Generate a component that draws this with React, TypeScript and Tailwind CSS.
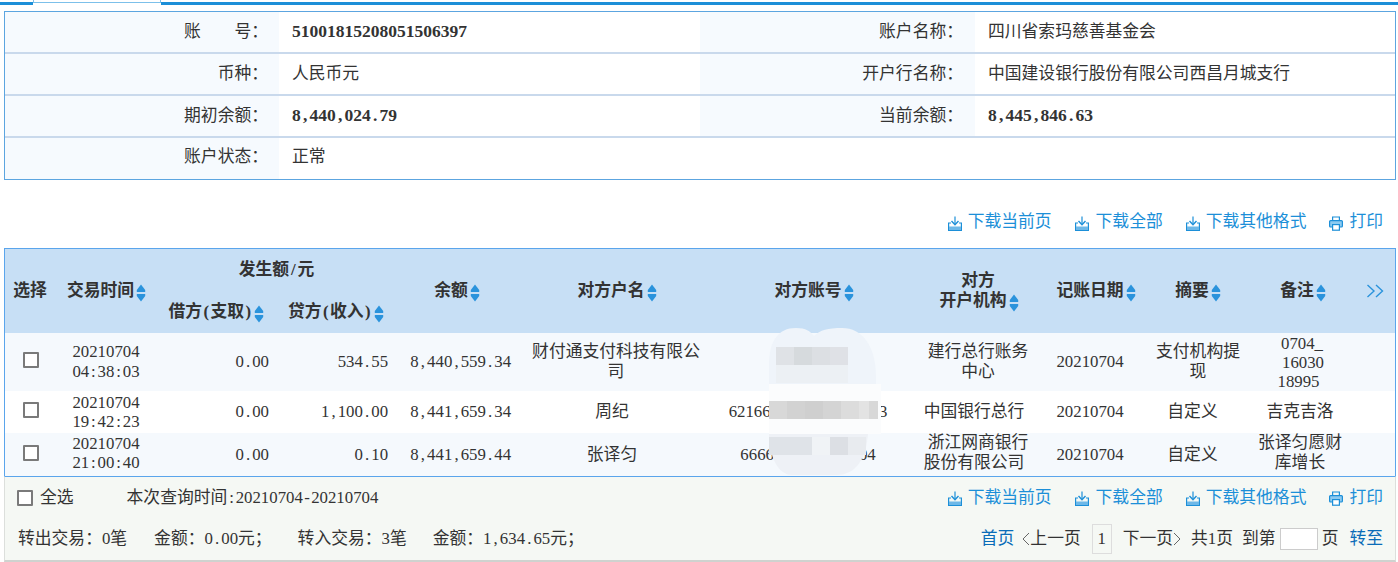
import React from "react";

const N = ({ t, bold }: { t: string; bold?: boolean }) => (
  <span className="whitespace-nowrap">
    {t.split("").map((c, i) => (
      <span key={i} className={bold ? "inline-block w-[8.75px] text-center text-[17.5px] font-bold" : "inline-block w-[8.4px] text-center"}>
        {c}
      </span>
    ))}
  </span>
);

const Sort = () => (
  <svg width="10" height="18" viewBox="0 0 10 18" className="ml-[2px] shrink-0 translate-y-[2px]">
    <path d="M5 0.5 L9.2 6 V8 H0.8 V6 Z" fill="#2a93dc" />
    <path d="M5 17.5 L9.2 12 V10 H0.8 V12 Z" fill="#2a93dc" />
  </svg>
);

const Dl = () => (
  <svg width="14" height="15" viewBox="0 0 14 15" fill="none" className="shrink-0 translate-y-[1px]">
    <path d="M7 0.5 V8" stroke="#1c8fd8" strokeWidth="1.2" />
    <path d="M3.5 5 L7 8.8 L10.5 5" stroke="#1c8fd8" strokeWidth="1.4" />
    <path d="M3 7 H0.6 V14.4 H13.4 V7 H11" stroke="#1c8fd8" strokeWidth="1.2" />
    <rect x="1" y="10.5" width="12" height="3.5" fill="#6db8e8" />
  </svg>
);

const Pr = () => (
  <svg width="14" height="15" viewBox="0 0 14 15" fill="none" className="shrink-0 translate-y-[1px]">
    <path d="M3.6 4.5 V1 H10.4 V4.5" stroke="#1c8fd8" strokeWidth="1.2" />
    <rect x="0.6" y="4.6" width="12.8" height="6.4" rx="1" fill="#8ccaf0" stroke="#1c8fd8" strokeWidth="1.2" />
    <rect x="3.6" y="8.6" width="6.8" height="5.6" fill="#fff" stroke="#1c8fd8" strokeWidth="1.2" />
  </svg>
);

const Links = () => (
  <div className="flex items-center text-[#1c8fd8]">
    <span className="flex items-center gap-[6px]"><Dl />下载当前页</span>
    <span className="ml-[23px] flex items-center gap-[7px]"><Dl />下载全部</span>
    <span className="ml-[23px] flex items-center gap-[6px]"><Dl />下载其他格式</span>
    <span className="ml-[23px] flex items-center gap-[6px]"><Pr />打印</span>
  </div>
);

const Box = () => (
  <input type="checkbox" className="block h-[16px] w-[16px] appearance-none rounded-[1px] border-2 border-[#7a7a7a] bg-white" />
);

const Chev = ({ right }: { right?: boolean }) => (
  <svg width="8" height="14" viewBox="0 0 8 14" fill="none" className="shrink-0">
    <path d={right ? "M1 1 L7 7 L1 13" : "M7 1 L1 7 L7 13"} stroke="#666" strokeWidth="1" />
  </svg>
);

const InfoRow = ({ a, b, c, d, last }: { a: React.ReactNode; b: React.ReactNode; c?: React.ReactNode; d?: React.ReactNode; last?: boolean }) => (
  <div className={last ? "grid h-[41px] grid-cols-[274px_421px_275px_1fr]" : "grid h-[42px] grid-cols-[274px_421px_275px_1fr] border-b-2 border-[#c9d9ec]"}>
    <div className={last ? "flex items-center justify-end whitespace-pre bg-[#f6fafe] pb-[3px] pr-[11px]" : "flex items-center justify-end whitespace-pre bg-[#f6fafe] pb-[1px] pr-[11px]"}>{a}</div>
    <div className={last ? "flex items-center pb-[3px] pl-[13px]" : "flex items-center pb-[1px] pl-[13px]"}>{b}</div>
    <div className={c ? "flex items-center justify-end bg-[#f6fafe] pb-[1px] pr-[12px]" : ""}>{c}</div>
    <div className="flex items-center pb-[1px] pl-[13px]">{d}</div>
  </div>
);

const Th = ({ children, className = "" }: { children: React.ReactNode; className?: string }) => (
  <span className={`inline-flex items-center justify-center font-bold ${className}`}>
    {children}
    <Sort />
  </span>
);

const rows = [
  {
    h: "h-[58px] bg-[#f5f9fd]",
    time: ["20210704", "04:38:03"],
    timeCls: "pr-[3px]",
    cellCls: "",
    c: "534.55",
    bal: "8,440,559.34",
    name: "财付通支付科技有限公司",
    nameCls: "pl-[12px] pr-[8px]",
    sumCls: "pl-[15px] pr-[9px]",
    acct: <span />,
    orgCls: "pl-[18px] pr-[10px]",
    org: "建行总行账务中心",
    sum: "支付机构提现",
    note: (
      <div className="leading-[19px]">
        <div className="pl-[4px]"><N t="0704_" /></div>
        <div className="pl-[6px]"><N t="16030" /></div>
        <div className="pr-[3px]"><N t="18995" /></div>
      </div>
    ),
  },
  {
    h: "h-[42px] bg-white",
    time: ["20210704", "19:42:23"],
    timeCls: "pr-[3px] leading-[19px]",
    cellCls: "",
    c: "1,100.00",
    bal: "8,441,659.34",
    name: "周纪",
    nameCls: "pl-[10px] pr-[14px]",
    sumCls: "pl-[12px] pr-[17px]",
    acct: <span className="flex justify-center"><N t="62166" /><span className="inline-block w-[100px]" /><N t="43" /></span>,
    orgCls: "px-[14px]",
    org: "中国银行总行",
    sum: "自定义",
    note: "吉克吉洛",
  },
  {
    h: "h-[42px] bg-[#f5f9fd]",
    time: ["20210704", "21:00:40"],
    timeCls: "pr-[3px] pb-[3px] leading-[19px]",
    cellCls: "pb-[3px]",
    c: "0.10",
    bal: "8,441,659.44",
    name: "张译匀",
    nameCls: "pl-[10px] pr-[14px]",
    sumCls: "pl-[12px] pr-[17px]",
    acct: <span className="flex justify-center"><N t="6666" /><span className="inline-block w-[85px]" /><N t="04" /></span>,
    orgCls: "px-[10px]",
    org: (
      <div className="whitespace-nowrap">
        <div className="pl-[8px]">浙江网商银行</div>
        <div>股份有限公司</div>
      </div>
    ),
    sum: "自定义",
    note: "张译匀愿财库增长",
  },
];

export default function App() {
  return (
    <div className="relative h-[562px] w-[1398px] overflow-hidden bg-white font-['Liberation_Serif','Noto_Sans_CJK_SC',serif] text-[16.8px] leading-[20px] text-[#333]">
      <div className="flex h-[5px] items-end">
        <div className="h-[3px] w-[33px] bg-[#1c8fd8]" />
        <div className="h-[3px] w-[128px] self-start border-x border-b border-[#7cc0ea] bg-white" />
        <div className="h-[3px] flex-1 bg-[#1c8fd8]" />
      </div>

      <div className="ml-1 mr-[2px] mt-[6px] border border-[#5ca5e0]">
        <InfoRow
          a={"账\u3000\u3000号："}
          b={<N t="51001815208051506397" bold />}
          c="账户名称："
          d="四川省索玛慈善基金会"
        />
        <InfoRow a="币种：" b="人民币元" c="开户行名称：" d="中国建设银行股份有限公司西昌月城支行" />
        <InfoRow a="期初余额：" b={<N t="8,440,024.79" bold />} c="当前余额：" d={<N t="8,445,846.63" bold />} />
        <InfoRow a="账户状态：" b="正常" last />
      </div>

      <div className="flex h-[68px] items-center justify-end pr-[15px] pt-[16px]">
        <Links />
      </div>

      <div className="ml-1 mr-[2px] border-x border-t border-[#5aa5ec]">
        <table className="w-full table-fixed">
          <colgroup>
            <col className="w-[50px]" />
            <col className="w-[105px]" />
            <col className="w-[118px]" />
            <col className="w-[119px]" />
            <col className="w-[123px]" />
            <col className="w-[188px]" />
            <col className="w-[200px]" />
            <col className="w-[132px]" />
            <col className="w-[100px]" />
            <col className="w-[110px]" />
            <col className="w-[100px]" />
            <col className="w-[45px]" />
          </colgroup>
          <thead className="bg-[#c7dff5]">
            <tr className="h-[42px]">
              <th rowSpan={2} className="font-bold">选择</th>
              <th rowSpan={2}><Th className="pr-[2px]">交易时间</Th></th>
              <th colSpan={2} className="pr-[4px] font-bold">发生额<N t="/" />元</th>
              <th rowSpan={2}><Th className="pr-[3px]">余额</Th></th>
              <th rowSpan={2}><Th className="pl-[6px]">对方户名</Th></th>
              <th rowSpan={2}><Th className="pl-[12px]">对方账号</Th></th>
              <th rowSpan={2}>
                <div className="pl-[8px] font-bold">对方</div>
                <Th className="pl-[10px]">开户机构</Th>
              </th>
              <th rowSpan={2}><Th className="pl-[12px]">记账日期</Th></th>
              <th rowSpan={2}><Th className="pl-[6px]">摘要</Th></th>
              <th rowSpan={2}><Th className="pl-[6px]">备注</Th></th>
              <th rowSpan={2}>
                <svg width="18" height="14" viewBox="0 0 18 14" fill="none" className="mx-auto translate-x-[2px]">
                  <path d="M1.5 1 L8 7 L1.5 13 M10 1 L16.5 7 L10 13" stroke="#2a93dc" strokeWidth="1.4" />
                </svg>
              </th>
            </tr>
            <tr className="h-[42px]">
              <th className="pr-[5px]"><Th>借方<N t="(" />支取<N t=")" /></Th></th>
              <th className="pr-[3px]"><Th>贷方<N t="(" />收入<N t=")" /></Th></th>
            </tr>
          </thead>
          <tbody className="text-center">
            {rows.map((r, i) => (
              <tr key={i} className={r.h}>
                <td><div className="mb-[4px] flex justify-center pl-[2px]"><Box /></div></td>
                <td className={r.timeCls}><div><N t={r.time[0]} /></div><div><N t={r.time[1]} /></div></td>
                <td className="pr-[9px] text-right"><N t="0.00" /></td>
                <td className="pr-[9px] text-right"><N t={r.c} /></td>
                <td className="pr-[9px] text-right"><N t={r.bal} /></td>
                <td className={r.nameCls}>{r.name}</td>
                <td>{r.acct}</td>
                <td className={`${r.orgCls} ${r.cellCls}`}>{r.org}</td>
                <td><N t="20210704" /></td>
                <td className={r.sumCls}>{r.sum}</td>
                <td className={`px-[8px] ${r.cellCls}`}>{r.note}</td>
                <td />
              </tr>
            ))}
          </tbody>
        </table>
      </div>

      <div className="ml-1 mr-[2px] h-[86px] border-x border-t border-b-2 border-x-[#dcdfdc] border-t-[#5aa5ec] border-b-[#cfd2cf] bg-[#f5f8f4]">
        <div className="flex h-[41px] items-center justify-between pr-[12px]">
          <div className="flex items-center pl-[12px]">
            <Box />
            <span className="ml-[7px]">全选</span>
            <span className="ml-[53px]">本次查询时间<N t=":20210704-20210704" /></span>
          </div>
          <Links />
        </div>
        <div className="flex h-[42px] items-center justify-between pr-[12px]">
          <div className="flex items-center pl-[13px]">
            <span>转出交易：<N t="0" />笔</span>
            <span className="ml-[27px]">金额：<N t="0.00" />元；</span>
            <span className="ml-[26px]">转入交易：<N t="3" />笔</span>
            <span className="ml-[26px]">金额：<N t="1,634.65" />元；</span>
          </div>
          <div className="flex items-center">
            <span className="text-[#0a6cb8]">首页</span>
            <span className="ml-[8px] flex items-center"><Chev />上一页</span>
            <span className="ml-[11px] flex h-[30px] w-[20px] items-center justify-center border border-[#ddd]">1</span>
            <span className="ml-[11px] flex items-center">下一页<Chev right /></span>
            <span className="ml-[10px]">共<N t="1" />页</span>
            <span className="ml-[9px]">到第</span>
            <span className="ml-[4px] h-[22px] w-[38px] border border-[#ccc] bg-white" />
            <span className="ml-[4px]">页</span>
            <span className="ml-[11px] text-[#0a6cb8]">转至</span>
          </div>
        </div>
      </div>

      <svg width="130" height="152" viewBox="0 0 130 152" className="absolute left-[760px] top-[326px]">
        <path d="M9 40 C9 15 18 2 36 2 C46 2 50 5 54 10 C60 4 68 2 82 2 C102 2 116 20 116 50 V58 H9 Z" fill="#eff4fa" />
        <rect x="9" y="58" width="112" height="50" fill="#fbfcfd" />
        <path d="M9 108 H108 C106 130 98 149 76 149 H32 C18 149 9 130 9 108 Z" fill="#eef1f6" />
        <g>
          <rect x="16" y="21" width="18" height="18" fill="#dfe2e6" />
          <rect x="34" y="21" width="18" height="18" fill="#d6dadd" />
          <rect x="52" y="21" width="18" height="18" fill="#dcdfe3" />
          <rect x="70" y="21" width="18" height="18" fill="#dfe1e6" />
          <rect x="16" y="39" width="72" height="18" fill="#ecf0f4" />
          <rect x="9" y="75" width="18" height="18" fill="#d8d8d8" />
          <rect x="27" y="75" width="18" height="18" fill="#d2d2d2" />
          <rect x="45" y="75" width="18" height="18" fill="#cfcfcf" />
          <rect x="63" y="75" width="18" height="18" fill="#d4d4d4" />
          <rect x="81" y="75" width="18" height="18" fill="#dcdcdc" />
          <rect x="99" y="75" width="10" height="18" fill="#e3e3e3" />
          <rect x="109" y="75" width="9" height="18" fill="#d8d8d8" />
          <rect x="9" y="111" width="43" height="18" fill="#dfe3e8" />
          <rect x="52" y="111" width="18" height="18" fill="#f0f3f6" />
          <rect x="70" y="111" width="18" height="18" fill="#dcdfe4" />
          <rect x="88" y="111" width="18" height="18" fill="#e8ebef" />
        </g>
      </svg>
    </div>
  );
}
